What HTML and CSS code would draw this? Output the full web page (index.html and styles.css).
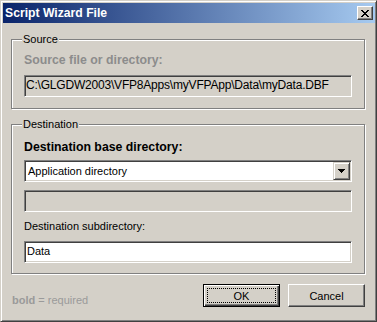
FILE: index.html
```html
<!DOCTYPE html>
<html lang="en">
<head>
    <meta charset="UTF-8">
    <title>Script Wizard File</title>
    <link rel="stylesheet" href="styles.css">
</head>
<body>
<div class="window">
    <div class="titlebar">
        <span class="title">Script Wizard File</span>
        <button class="close" type="button">
            <svg width="8" height="7" viewBox="0 0 8 7" shape-rendering="crispEdges">
                <path d="M0 0h2v1h-2zM6 0h2v1h-2zM1 1h2v1h-2zM5 1h2v1h-2zM2 2h4v1h-4zM3 3h2v1h-2zM2 4h4v1h-4zM1 5h2v1h-2zM5 5h2v1h-2zM0 6h2v1h-2zM6 6h2v1h-2z" fill="#000"/>
            </svg>
        </button>
    </div>
    <div class="content">
        <fieldset class="group group-source">
            <legend>Source</legend>
            <div class="label label-bold label-disabled">Source file or directory:</div>
            <div class="textbox textbox-readonly path">C:\GLGDW2003\VFP8Apps\myVFPApp\Data\myData.DBF</div>
        </fieldset>

        <fieldset class="group group-dest">
            <legend>Destination</legend>
            <div class="label label-bold">Destination base directory:</div>
            <div class="combo">
                <span class="combo-text">Application directory</span>
                <span class="combo-button">
                    <svg width="7" height="4" viewBox="0 0 7 4" shape-rendering="crispEdges">
                        <path d="M0 0h7v1h-7zM1 1h5v1h-5zM2 2h3v1h-3zM3 3h1v1h-1z" fill="#000"/>
                    </svg>
                </span>
            </div>
            <div class="textbox textbox-readonly textbox-gap"></div>
            <div class="label label-sub">Destination subdirectory:</div>
            <div class="textbox">Data</div>
        </fieldset>

        <div class="footer">
            <span class="hint"><b>bold</b> = required</span>
            <button class="btn btn-default" type="button">OK</button>
            <button class="btn" type="button">Cancel</button>
        </div>
    </div>
</div>
</body>
</html>
```

FILE: styles.css
```css
* {
    box-sizing: border-box;
}
body {
    margin: 0;
    padding: 0;
    font-family: 'Liberation Sans', Arial, sans-serif;
    font-size: 11px;
    color: #000;
    background-color: #d4d0c8;
}
.window {
    width: 377px;
    height: 322px;
    display: flex;
    flex-direction: column;
    padding: 1px;
    border: 1px solid;
    border-color: #d4d0c8 #404040 #404040 #d4d0c8;
    box-shadow: inset 1px 1px 0 #fff, inset -1px -1px 0 #808080;
    background-color: #d4d0c8;
}
.titlebar {
    height: 20px;
    margin: 1px 0 0 1px;
    display: flex;
    align-items: center;
    padding-left: 2px;
    background: linear-gradient(to right, #0a246a, #a6caf0);
}
.title {
    flex: 1;
    color: #fff;
    font-weight: bold;
    font-size: 12.2px;
}
.close {
    width: 16px;
    height: 14px;
    margin-right: 2px;
    padding: 0;
    display: flex;
    align-items: center;
    justify-content: center;
    border: 1px solid;
    border-color: #fff #404040 #404040 #fff;
    box-shadow: inset -1px -1px 0 #808080;
    background-color: #d4d0c8;
}
.content {
    flex: 1;
    display: flex;
    flex-direction: column;
    padding: 0 10px 0 9px;
}
.group {
    margin: 0;
    border: 1px solid #808080;
    box-shadow: inset 1px 1px 0 #fff, 1px 1px 0 #fff;
    padding: 0 12px;
    min-width: 0;
}
.group legend {
    margin-left: -2px;
    padding: 0 1px;
    line-height: 13px;
    background-color: #d4d0c8;
}
.group-source {
    margin-top: 10px;
    padding-top: 7px;
    padding-bottom: 11px;
}
.group-dest {
    margin-top: 9px;
    padding-top: 9px;
    padding-bottom: 10px;
}
.label {
    line-height: 13px;
}
.label-bold {
    font-weight: bold;
    font-size: 12.3px;
    line-height: 14px;
}
.label-disabled {
    color: #8c8c8c;
}
.label-sub {
    margin-top: 8px;
}
.textbox {
    height: 22px;
    line-height: 18px;
    padding: 0 2px;
    border: 1px solid;
    border-color: #808080 #fff #fff #808080;
    box-shadow: inset 1px 1px 0 #404040, inset -1px -1px 0 #d4d0c8;
    background-color: #fff;
    white-space: nowrap;
    overflow: hidden;
}
.group-dest .label-sub + .textbox {
    margin-top: 8px;
}
.textbox-readonly {
    background-color: #d4d0c8;
}
.path {
    margin-top: 8px;
    padding-left: 1px;
    font-size: 12px;
    letter-spacing: -0.2px;
}
.textbox-gap {
    margin-top: 8px;
}
.combo {
    height: 22px;
    margin-top: 6px;
    display: flex;
    padding: 1px;
    border: 1px solid;
    border-color: #808080 #fff #fff #808080;
    box-shadow: inset 1px 1px 0 #404040, inset -1px -1px 0 #d4d0c8;
    background-color: #fff;
}
.combo-text {
    flex: 1;
    line-height: 18px;
    padding-left: 2px;
}
.combo-button {
    width: 17px;
    height: 18px;
    display: flex;
    align-items: center;
    justify-content: center;
    border: 1px solid;
    border-color: #d4d0c8 #404040 #404040 #d4d0c8;
    box-shadow: inset 1px 1px 0 #fff, inset -1px -1px 0 #808080;
    background-color: #d4d0c8;
}
.footer {
    display: flex;
    align-items: flex-end;
    gap: 8px;
    margin-top: 10px;
    padding-left: 1px;
}
.hint {
    margin-right: auto;
    line-height: 13px;
    color: #9a9a9a;
}
.btn {
    width: 77px;
    height: 23px;
    padding: 0;
    font-family: 'Liberation Sans', Arial, sans-serif;
    font-size: 11px;
    color: #000;
    border: 1px solid;
    border-color: #fff #404040 #404040 #fff;
    box-shadow: inset -1px -1px 0 #808080, inset 1px 1px 0 #d4d0c8;
    background-color: #d4d0c8;
}
.btn-default {
    border-color: #000;
    box-shadow: inset 1px 1px 0 #fff, inset -1px -1px 0 #404040, inset -2px -2px 0 #808080;
    outline: 1px dotted #000;
    outline-offset: -5px;
}
```
